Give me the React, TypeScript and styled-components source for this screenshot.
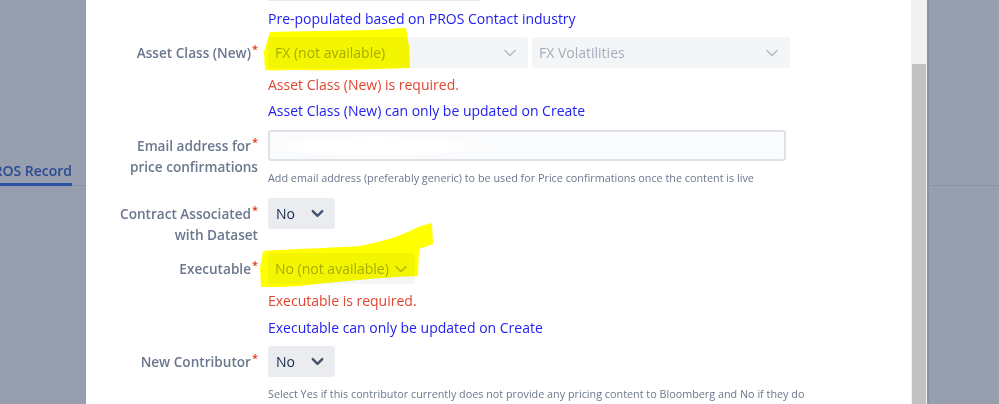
import React from "react";
import styled, { createGlobalStyle, css } from "styled-components";
import { ChevronDown } from "lucide-react";

const GlobalStyle = createGlobalStyle`
  html, body {
    margin: 0;
    padding: 0;
    background: #979fae;
    overflow: hidden;
  }
  body {
    font-family: "Open Sans", "Noto Sans", sans-serif;
  }
`;

const Page = styled.div`
  position: relative;
  display: flex;
  width: 999px;
  height: 404px;
  overflow: hidden;
  background: #979fae;
`;

const Backdrop = styled.div<{ $w: number }>`
  position: relative;
  flex: ${(p) => `0 0 ${p.$w}px`};
`;

const BackdropLine = styled.div`
  margin-top: 185px;
  height: 1px;
  background: #8a92a3;
`;

const Tab = styled.div`
  position: absolute;
  right: 14px;
  top: 159px;
  white-space: nowrap;
  font-size: 14px;
  font-weight: 600;
  color: #294a93;
  line-height: 24px;
  border-bottom: 3px solid #2a50a8;
  z-index: 1;
`;

const Modal = styled.div`
  flex: 0 0 841px;
  display: flex;
  background: #fff;
  border-right: 2px solid #8a93a5;
`;

const Body = styled.div`
  flex: 1;
  padding-top: 7px;
`;

const Scrollbar = styled.div`
  flex: 0 0 16px;
  display: flex;
  flex-direction: column;
  background: #f1f1f1;
  padding-top: 64px;
`;

const Thumb = styled.div`
  flex: 1;
  margin: 0 1px;
  background: #c1c1c1;
`;

const Row = styled.div<{ $mt?: number }>`
  display: grid;
  grid-template-columns: 172px 1fr;
  column-gap: 10px;
  margin-top: ${(p) => p.$mt ?? 0}px;
`;

const Label = styled.div`
  text-align: right;
  font-size: 13.6px;
  font-weight: 600;
  line-height: 21px;
  color: #6b778c;
  padding-top: 5px;
`;

const Req = styled.span`
  color: #de350b;
  font-size: 11px;
  vertical-align: top;
  line-height: 14px;
  margin-left: 1px;
`;

const Field = styled.div`
  display: flex;
  flex-direction: column;
  align-items: flex-start;
`;

const Controls = styled.div`
  display: flex;
  gap: 4px;
`;

const Select = styled.div<{ $w: number; $disabled?: boolean }>`
  box-sizing: border-box;
  width: ${(p) => p.$w}px;
  height: 31px;
  border-radius: 3px;
  display: flex;
  align-items: center;
  justify-content: space-between;
  padding: 0 8px 0 7px;
  font-size: 14px;
  white-space: nowrap;
  ${(p) =>
    p.$disabled
      ? css`
          background: #f4f5f7;
          color: #a5adba;
        `
      : css`
          background: #ebecf0;
          color: #172b4d;
          padding-left: 8px;
        `}
`;

const Input = styled.div`
  box-sizing: border-box;
  width: 518px;
  height: 31px;
  border: 2px solid #dfe1e6;
  border-radius: 3px;
  background: radial-gradient(ellipse 110px 11px at 105px 14px, #fff 70%, rgba(255, 255, 255, 0)) #fafbfc;
`;

const Message = styled.div<{ $tone: "error" | "info"; $mt?: number }>`
  font-size: 14px;
  line-height: 20px;
  margin-top: ${(p) => p.$mt ?? 6}px;
  white-space: nowrap;
  color: ${(p) => (p.$tone === "error" ? "#e2452f" : "#2222ee")};
`;

const Help = styled.div<{ $mt?: number }>`
  font-size: 10.8px;
  line-height: 16px;
  margin-top: ${(p) => p.$mt ?? 9}px;
  white-space: nowrap;
  color: #6b778c;
`;

const Note = styled.div`
  margin-left: 182px;
  margin-top: 8px;
  font-size: 14px;
  line-height: 20px;
  color: #2222ee;
`;

const TopEdge = styled.div`
  margin-left: 182px;
  margin-top: -7px;
  width: 212px;
  height: 1px;
  background: #e8e9ec;
`;

const Highlights = styled.svg`
  position: absolute;
  left: 0;
  top: 0;
  mix-blend-mode: multiply;
  pointer-events: none;
`;

const Chevron = ({ disabled }: { disabled?: boolean }) => (
  <ChevronDown
    size={disabled ? 20 : 19}
    strokeWidth={disabled ? 1.8 : 3}
    color={disabled ? "#b3bac5" : "#42526e"}
  />
);

export default function App() {
  return (
    <>
      <GlobalStyle />
      <Page>
        <Backdrop $w={86}>
          <BackdropLine />
          <Tab>PROS Record</Tab>
        </Backdrop>
        <Modal>
          <Body>
            <TopEdge />
            <Note>Pre-populated based on PROS Contact industry</Note>
            <Row $mt={8}>
              <Label>
                Asset Class (New)<Req>*</Req>
              </Label>
              <Field>
                <Controls>
                  <Select $w={260} $disabled>
                    FX (not available)
                    <Chevron disabled />
                  </Select>
                  <Select $w={258} $disabled>
                    FX Volatilities
                    <Chevron disabled />
                  </Select>
                </Controls>
                <Message $tone="error" $mt={7}>
                  Asset Class (New) is required.
                </Message>
                <Message $tone="info">Asset Class (New) can only be updated on Create</Message>
              </Field>
            </Row>
            <Row $mt={9}>
              <Label>
                Email address for<Req>*</Req>
                <br />
                price confirmations
              </Label>
              <Field>
                <Input />
                <Help $mt={9}>
                  Add email address (preferably generic) to be used for Price confirmations once the
                  content is live
                </Help>
              </Field>
            </Row>
            <Row $mt={12}>
              <Label>
                Contract Associated<Req>*</Req>
                <br />
                with Dataset
              </Label>
              <Field>
                <Select $w={67}>
                  No
                  <Chevron />
                </Select>
              </Field>
            </Row>
            <Row $mt={8}>
              <Label>
                Executable<Req>*</Req>
              </Label>
              <Field>
                <Select $w={147} $disabled style={{ paddingRight: 4 }}>
                  No (not available)
                  <Chevron disabled />
                </Select>
                <Message $tone="error" $mt={7}>
                  Executable is required.
                </Message>
                <Message $tone="info" $mt={7}>
                  Executable can only be updated on Create
                </Message>
              </Field>
            </Row>
            <Row $mt={8}>
              <Label>
                New Contributor<Req>*</Req>
              </Label>
              <Field>
                <Select $w={67}>
                  No
                  <Chevron />
                </Select>
                <Help $mt={9}>
                  Select Yes if this contributor currently does not provide any pricing content to
                  Bloomberg and No if they do
                </Help>
              </Field>
            </Row>
          </Body>
          <Scrollbar>
            <Thumb />
          </Scrollbar>
        </Modal>
        <Backdrop $w={70}>
          <BackdropLine />
        </Backdrop>
        <Highlights width="999" height="404" viewBox="0 0 999 404">
          <path
            fill="#ffff00"
            d="M270,32 C300,31 340,31 372,30 C390,29 398,28 406,28 L409,46 L410,68 C380,69 330,71 300,70 C285,70 272,71 265,70 L264,52 Z"
          />
          <path
            fill="#ffff00"
            d="M263,251 C290,249 330,248 360,246 C385,241 400,236 412,230 C420,226 427,224 432,223 L433,244 L419,249 L418,276 C390,277 340,281 300,286 C285,287 270,287 261,287 L260,268 Z"
          />
        </Highlights>
      </Page>
    </>
  );
}
